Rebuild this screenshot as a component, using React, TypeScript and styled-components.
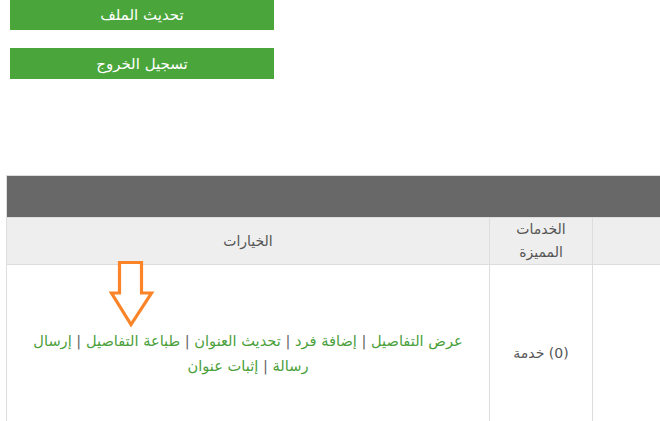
import styled, { createGlobalStyle } from 'styled-components';

const GlobalStyle = createGlobalStyle`
  html, body {
    margin: 0;
    padding: 0;
    background: #fff;
    overflow: hidden;
  }
  body {
    font-family: "DejaVu Sans", "Noto Sans", sans-serif;
    color: #555;
  }
`;

const actions = [
  'عرض التفاصيل',
  'إضافة فرد',
  'تحديث العنوان',
  'طباعة التفاصيل',
  'إرسال رسالة',
  'إثبات عنوان',
];

const DownArrow = () => (
  <ArrowBox width="48" height="70" viewBox="0 0 48 70">
    <path
      d="M11.5 3.5 H33.5 V34 H43.5 L23 65.5 L3.5 34 H11.5 Z"
      fill="#fff"
      stroke="#fb8429"
      strokeWidth="3.2"
      strokeLinejoin="miter"
    />
  </ArrowBox>
);

export default function App() {
  return (
    <Page>
      <GlobalStyle />
      <ButtonStack>
        <GreenButton>تحديث الملف</GreenButton>
        <GreenButton>تسجيل الخروج</GreenButton>
      </ButtonStack>

      <TableWrap>
        <Table>
          <colgroup>
            <col style={{ width: 104 }} />
            <col style={{ width: 103 }} />
            <col style={{ width: 483 }} />
          </colgroup>
          <thead>
            <tr>
              <TitleCell colSpan={3} />
            </tr>
            <tr>
              <HeadCell />
              <HeadCell>الخدمات المميزة</HeadCell>
              <HeadCell>الخيارات</HeadCell>
            </tr>
          </thead>
          <tbody>
            <tr>
              <BodyCell />
              <BodyCell>(0) خدمة</BodyCell>
              <OptionsCell>
                {actions.map((a, i) => (
                  <span key={a}>
                    <ActionLink href="#">{a}</ActionLink>
                    {i < actions.length - 1 && <Sep> | </Sep>}
                  </span>
                ))}
              </OptionsCell>
            </tr>
          </tbody>
        </Table>
        <DownArrow />
      </TableWrap>
    </Page>
  );
}

const Page = styled.div`
  width: 660px;
  height: 421px;
  overflow: hidden;
`;

const ButtonStack = styled.div`
  display: flex;
  flex-direction: column;
  gap: 18px;
  width: 264px;
  margin-left: 10px;
`;

const GreenButton = styled.button`
  height: 30px;
  border: none;
  padding: 0;
  background: #4aa63b;
  color: #fff;
  font-family: "DejaVu Sans", sans-serif;
  font-size: 15px;
  direction: rtl;
  cursor: pointer;
  &:last-child {
    height: 31px;
  }
`;

const TableWrap = styled.div`
  position: relative;
  margin: 96px 0 0 6px;
  width: 690px;
`;

const Table = styled.table`
  direction: rtl;
  width: 690px;
  border-collapse: collapse;
  border: 1px solid #ddd;
  table-layout: fixed;
`;

const TitleCell = styled.th`
  height: 41px;
  padding: 0;
  background: #686868;
  border: 1px solid #ddd;
  border-bottom: none;
`;

const HeadCell = styled.th`
  height: 46px;
  padding: 0 10px;
  background: #eee;
  border: 1px solid #ddd;
  font-weight: normal;
  font-size: 14px;
  line-height: 23px;
  color: #555;
  text-align: center;
  vertical-align: middle;
`;

const BodyCell = styled.td`
  height: 175px;
  padding: 0 8px;
  border: 1px solid #ddd;
  font-size: 14px;
  color: #555;
  text-align: center;
  vertical-align: middle;
`;

const OptionsCell = styled(BodyCell)`
  padding: 0 20px;
  font-size: 14.6px;
  line-height: 25px;
`;

const ActionLink = styled.a`
  color: #4aa03a;
  text-decoration: none;
`;

const Sep = styled.span`
  color: #666;
`;

const ArrowBox = styled.svg`
  position: absolute;
  left: 102px;
  top: 84px;
`;
